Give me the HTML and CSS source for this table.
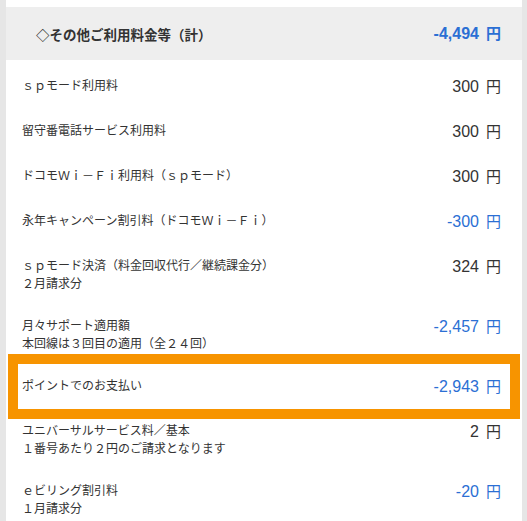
FILE: index.html
```html
<!DOCTYPE html>
<html lang="ja">
<head>
    <meta charset="UTF-8">
    <meta name="viewport" content="width=device-width, initial-scale=1.0">
    <title>ご利用料金明細</title>
    <link rel="stylesheet" href="styles.css">
</head>
<body>

    <div class="panel">
        <!-- Section header -->
        <div class="section-head">
            <span class="section-title">◇その他ご利用料金等（計）</span>
            <span class="amount minus">-4,494<span class="yen">円</span></span>
        </div>

        <div class="charge-list">
            <div class="charge-row">
                <div class="label">ｓｐモード利用料</div>
                <div class="amount">300<span class="yen">円</span></div>
            </div>
            <div class="charge-row">
                <div class="label">留守番電話サービス利用料</div>
                <div class="amount">300<span class="yen">円</span></div>
            </div>
            <div class="charge-row">
                <div class="label">ドコモＷｉ－Ｆｉ利用料（ｓｐモード）</div>
                <div class="amount">300<span class="yen">円</span></div>
            </div>
            <div class="charge-row">
                <div class="label">永年キャンペーン割引料（ドコモＷｉ－Ｆｉ）</div>
                <div class="amount minus">-300<span class="yen">円</span></div>
            </div>
            <div class="charge-row">
                <div class="label">ｓｐモード決済（料金回収代行／継続課金分）<br>２月請求分</div>
                <div class="amount">324<span class="yen">円</span></div>
            </div>
            <div class="charge-row">
                <div class="label">月々サポート適用額<br>本回線は３回目の適用（全２４回）</div>
                <div class="amount minus">-2,457<span class="yen">円</span></div>
            </div>
            <div class="charge-row highlight">
                <div class="label">ポイントでのお支払い</div>
                <div class="amount minus">-2,943<span class="yen">円</span></div>
            </div>
            <div class="charge-row">
                <div class="label">ユニバーサルサービス料／基本<br>１番号あたり２円のご請求となります</div>
                <div class="amount">2<span class="yen">円</span></div>
            </div>
            <div class="charge-row">
                <div class="label">ｅビリング割引料<br>１月請求分</div>
                <div class="amount minus">-20<span class="yen">円</span></div>
            </div>
        </div>
    </div>

</body>
</html>
```

FILE: styles.css
```css
body {
    margin: 0;
    padding: 0;
    background: #e6e6e6;
    font-family: 'Noto Sans CJK JP', sans-serif;
    color: #333333;
    overflow: hidden;
}

.panel {
    margin: 0 5px 0 6px;
    padding-top: 7px;
    background: #ffffff;
    min-height: 100vh;
}

/* Header band */
.section-head {
    display: flex;
    justify-content: space-between;
    align-items: center;
    height: 53px;
    padding: 0 21px 0 30px;
    background: #eeeeee;
}

.section-title {
    font-size: 13.5px;
    font-weight: bold;
    color: #333333;
}

.section-head .amount {
    font-weight: bold;
}

/* Rows */
.charge-list {
    padding: 4px 12px 0 12px;
}

.charge-row {
    display: flex;
    justify-content: space-between;
    align-items: flex-start;
    padding: 12px 9px 12px 4px;
}

.label {
    font-size: 12px;
    line-height: 18px;
}

.amount {
    height: 21px;
    font-family: 'Liberation Sans', 'Noto Sans CJK JP', sans-serif;
    font-size: 16px;
    line-height: 21px;
    color: #333333;
    white-space: nowrap;
}

.amount.minus {
    color: #2b6fd4;
}

.yen {
    font-family: 'Noto Sans CJK JP', sans-serif;
    font-size: 15px;
    line-height: 1;
    margin-left: 7px;
}

/* Orange frame round the points row */
.highlight {
    outline: 10px solid #f79400;
}
```
